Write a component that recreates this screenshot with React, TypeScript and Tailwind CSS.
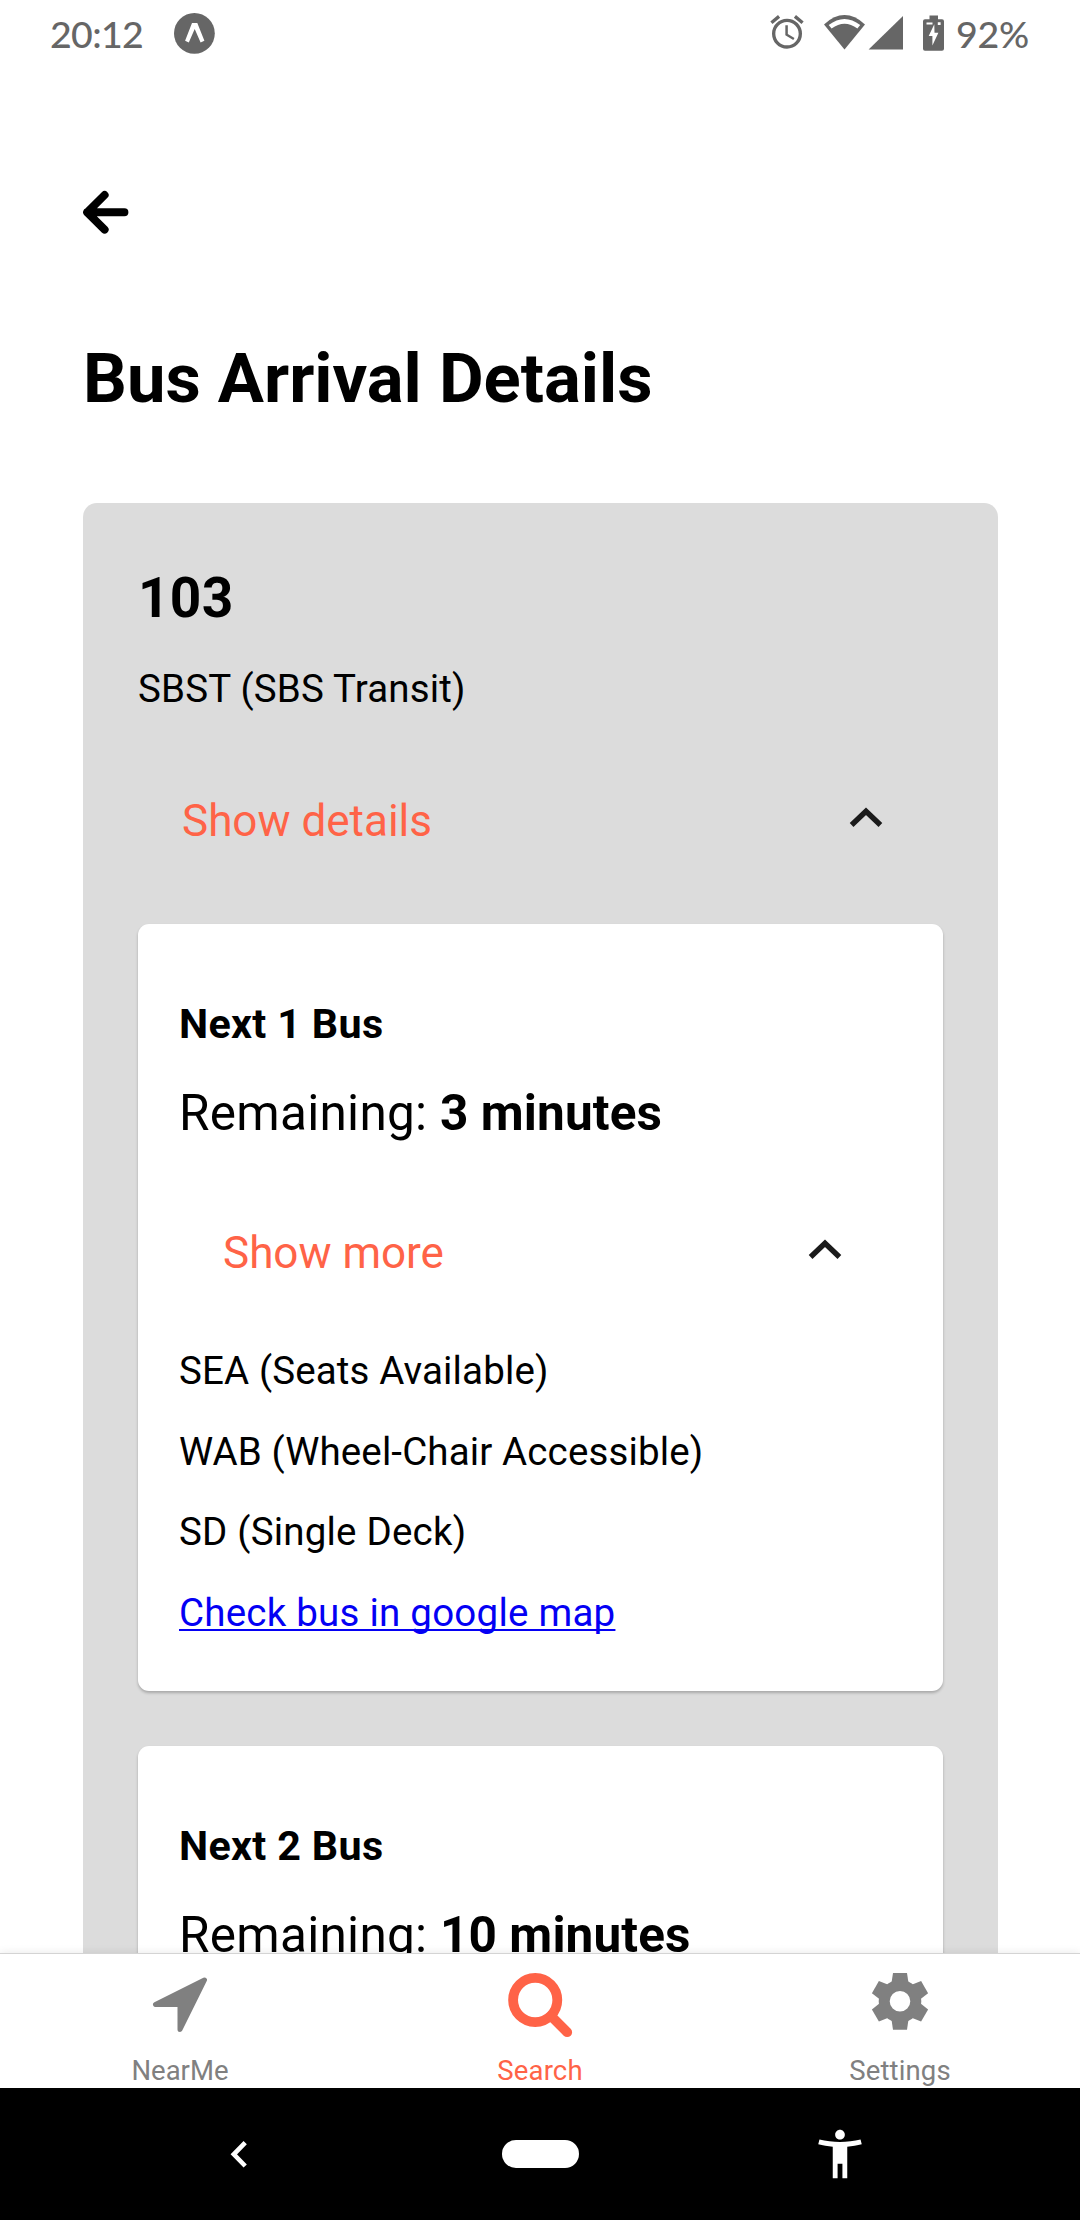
import React from "react";

function StatusBar() {
  return (
    <header className="flex h-[68px] shrink-0 justify-between pl-[50px] pr-[50px] text-[#666]">
      <div className="flex">
        <span className="w-[96px] pt-[11px] font-['Lato'] text-[37.5px] leading-[46px] font-medium tracking-[-0.65px]">20:12</span>
        <svg className="ml-[28px] mt-[13px] h-[41px] w-[41px]" viewBox="174 13 41 41">
          <circle cx="194.4" cy="33.4" r="20.4" fill="#666" />
          <path fill="#fff" d="M192 22.9h5.3l7.1 17.8-3.8 1.9-5.9-13.6-5.9 13.6-3.7-1.8z" />
        </svg>
      </div>
      <div className="flex">
        <svg className="mt-[12px] h-[40px] w-[40px]" viewBox="0 0 24 24" fill="#666">
          <path d="M22 5.72l-4.6-3.86-1.29 1.53 4.6 3.86L22 5.72zM7.88 3.39L6.6 1.86 2 5.71l1.29 1.53 4.59-3.85zM12.5 8H11v6l4.75 2.85.75-1.23-4-2.37V8zM12 4c-4.97 0-9 4.03-9 9s4.02 9 9 9a9 9 0 0 0 0-18zm0 16c-3.87 0-7-3.13-7-7s3.13-7 7-7 7 3.13 7 7-3.13 7-7 7z" />
        </svg>
        <svg className="ml-[14px] mt-[12px] h-[42px] w-[126px]" viewBox="820 12 126 42">
          <path fill="#666" d="M843.5 49.6L823 24.4Q843.5 5.8 864 24.4Z" />
          <path fill="#fff" d="M827.7 25Q843.5 13 859.2 25L856.4 28.5Q843.5 19 830.6 28.5Z" />
          <path fill="#666" d="M867.6 49.6H902V16Z" />
          <path fill="#666" d="M928.5 19.3V15.5H937V19.3H941Q943 19.3 943 21.3V48.8Q943 50.8 941 50.8H924Q922 50.8 922 48.8V21.3Q922 19.3 924 19.3Z" />
          <path fill="#fff" d="M925.5 22.4H931.5V24.6H925.5ZM936.8 22.2H939.6V25H936.8ZM933.3 24.3L927.7 36H931.4V45.5L937.4 32.8H933.5Z" />
        </svg>
        <span className="ml-[9px] w-[74px] pt-[11px] font-['Lato'] text-[37.5px] leading-[46px] font-medium whitespace-nowrap tracking-[-0.3px]">92%</span>
      </div>
    </header>
  );
}

function Disclosure({ label }: { label: string }) {
  return (
    <button className="flex h-[52px] w-full items-start justify-between pl-[44px] pr-[59px] text-left text-[44px] leading-[52px] text-[#ff6347]">
      <span>{label}</span>
      <svg className="mt-[11px] h-[23px] w-[36px]" viewBox="0 0 36 23" fill="none" stroke="#1b1b1b" strokeWidth="5.4">
        <path d="M3.6 19L18 5.2L32.4 19" />
      </svg>
    </button>
  );
}

function BusCard({ index, minutes }: { index: number; minutes: number }) {
  return (
    <article className="rounded-[11px] bg-white px-[41px] pt-[76px] pb-[55px] shadow-[0_2px_3px_rgba(0,0,0,0.24)]">
      <h3 className="text-[41.25px] leading-[48px] font-bold tracking-[0.33px]">Next {index} Bus</h3>
      <p className="mt-[36px] text-[49.5px] leading-[58px] tracking-[0.27px]">
        Remaining: <b className="font-bold tracking-[0.13px]">{minutes} minutes</b>
      </p>
      <div className="mt-[85px]">
        <Disclosure label="Show more" />
      </div>
      <div className="mt-[69px] flex flex-col items-start gap-[34.6px] text-[38.5px] leading-[46px] tracking-[0.13px]">
        <p>SEA (Seats Available)</p>
        <p>WAB (Wheel-Chair Accessible)</p>
        <p className="tracking-[0.2px]">SD (Single Deck)</p>
        <a className="tracking-[0.23px] text-[#0400f4] underline decoration-2 underline-offset-[3px] [text-decoration-skip-ink:none]">Check bus in google map</a>
      </div>
    </article>
  );
}

const TEETH = [0, 60, 120, 180, 240, 300];

function TabBar() {
  return (
    <nav className="relative grid h-[135px] shrink-0 grid-cols-3 border-t border-[#d4d4d4] bg-white text-center text-[27.5px] leading-[32px] text-[#808080] shadow-[0_-1px_8px_rgba(0,0,0,0.08)]">
      <div className="flex flex-col items-center pt-[16px]">
        <svg className="h-[70px] w-[70px]" viewBox="145 1970 70 70">
          <path d="M204.5 1980L155.5 2004.6H180V2029.5Z" fill="#808080" stroke="#808080" strokeWidth="5" strokeLinejoin="round" />
        </svg>
        <span className="mt-[15px]">NearMe</span>
      </div>
      <div className="flex flex-col items-center pt-[16px] text-[#ff6347]">
        <svg className="h-[70px] w-[70px]" viewBox="505 1970 70 70" fill="none" stroke="#ff6347">
          <circle cx="535.2" cy="2000" r="22.1" strokeWidth="9.8" />
          <path d="M551 2016L567.2 2032.2" strokeWidth="9.8" strokeLinecap="round" />
        </svg>
        <span className="mt-[15px] tracking-[0.15px]">Search</span>
      </div>
      <div className="flex flex-col items-center pt-[16px]">
        <svg className="h-[70px] w-[70px]" viewBox="-35 -31.3 70 70" fill="#808080">
          {TEETH.map((a) => (
            <path key={a} d="M-7 -28.4H7L8.4 -19L-8.4 -19Z" transform={`rotate(${a})`} />
          ))}
          <circle r="15.8" fill="none" stroke="#808080" strokeWidth="11" />
        </svg>
        <span className="mt-[15px] tracking-[0.15px]">Settings</span>
      </div>
    </nav>
  );
}

function SystemNav() {
  return (
    <footer className="flex h-[132px] shrink-0 items-center bg-black">
      <svg className="ml-[226px] h-[32px] w-[26px]" viewBox="226 2138 26 32" fill="none" stroke="#fff" strokeWidth="4.6">
        <path d="M245.2 2142.6L233.8 2154.3L245.2 2166" />
      </svg>
      <div className="ml-[250px] h-[28px] w-[77px] rounded-full bg-white" />
      <svg className="ml-[232px] h-[58px] w-[58px]" viewBox="0 0 24 24" fill="#fff">
        <path d="M20.5 6c-2.61.7-5.67 1-8.5 1s-5.89-.3-8.5-1L3 8c1.86.5 4 .83 6 1v13h2v-6h2v6h2V9c2-.17 4.14-.5 6-1l-.5-2zM12 6c1.1 0 2-.9 2-2s-.9-2-2-2-2 .9-2 2 .9 2 2 2z" />
      </svg>
    </footer>
  );
}

export default function App() {
  return (
    <div className="flex h-[2220px] w-[1080px] flex-col overflow-hidden bg-white font-['Roboto',sans-serif] text-black">
      <StatusBar />
      <main className="min-h-0 flex-1 overflow-hidden pl-[83px] pr-[82px] pt-[122px]">
        <svg className="h-[45px] w-[46px]" viewBox="83 190 46 45" fill="none" stroke="#000" strokeWidth="8" strokeLinecap="round" strokeLinejoin="round">
          <path d="M124.4 212.3H87.2M104.6 195L87.2 212.3L104.6 229.6" />
        </svg>
        <h1 className="mt-[104px] text-[68.75px] leading-[80px] font-bold">Bus Arrival Details</h1>
        <section className="mt-[84px] rounded-[14px] bg-[#dcdcdc] px-[55px] pt-[63px] pb-[55px]">
          <h2 className="text-[55px] leading-[64px] font-bold tracking-[0.3px]">103</h2>
          <p className="mt-[36px] text-[38.5px] leading-[46px] tracking-[0.18px]">SBST (SBS Transit)</p>
          <div className="mt-[83px]">
            <Disclosure label="Show details" />
          </div>
          <div className="mt-[77px] flex flex-col gap-[55px]">
            <BusCard index={1} minutes={3} />
            <BusCard index={2} minutes={10} />
          </div>
        </section>
      </main>
      <TabBar />
      <SystemNav />
    </div>
  );
}
